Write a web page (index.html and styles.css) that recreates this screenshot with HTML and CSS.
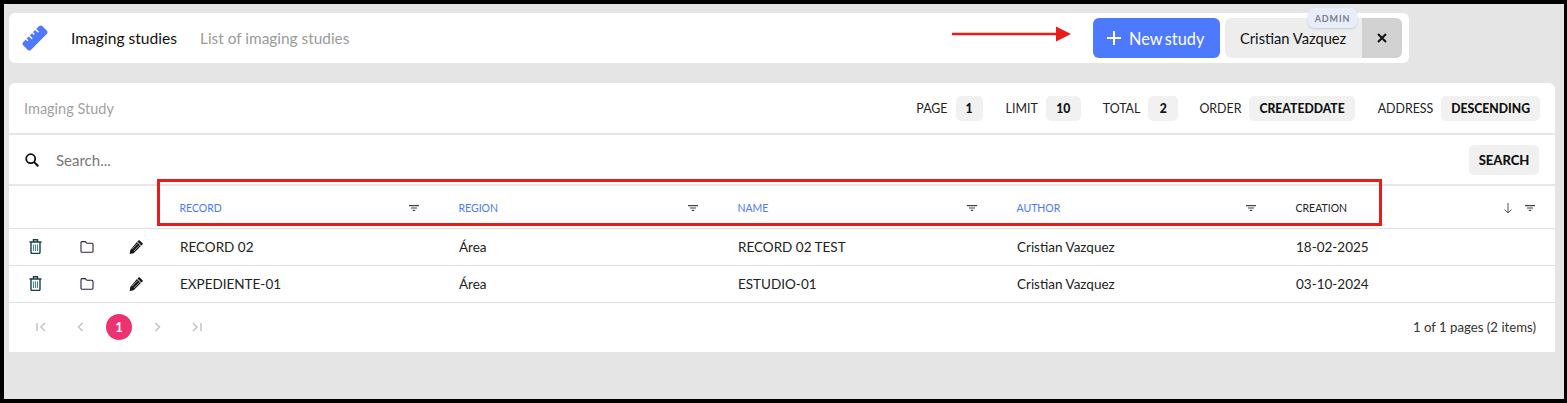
FILE: index.html
```html
<!DOCTYPE html>
<html lang="en">
<head>
<meta charset="utf-8">
<title>Imaging studies</title>
<link rel="stylesheet" href="styles.css">
</head>
<body>
<div class="frame">
  <header class="topbar">
    <svg class="logo" viewBox="0 0 26 26" width="26" height="26"><g transform="rotate(-45 13 13)"><rect x="-0.500" y="7.500" width="27" height="11" rx="2.500" fill="#4d79ff"/><path stroke="#fff" stroke-width="1.500" d="M6 7v3M10.500 7v4.500M15 7v3M19.500 7v4.500"/></g></svg>
    <span class="title">Imaging studies</span>
    <span class="subtitle">List of imaging studies</span>
    <div class="topbar-actions">
      <button class="new-btn"><svg viewBox="0 0 14 14" width="14" height="14"><path stroke="#fff" stroke-width="2" d="M7 0v14M0 7h14"/></svg>New study</button>
      <div class="user">
        <span class="user-name">Cristian Vazquez</span>
        <span class="user-close"><svg viewBox="0 0 10 10" width="10" height="10"><path stroke="#111" stroke-width="2" d="m1 1 8 8M9 1l-8 8"/></svg></span>
        <span class="role">ADMIN</span>
      </div>
    </div>
  </header>

  <main class="card">
    <div class="meta">
      <span class="meta-title">Imaging Study</span>
      <div class="meta-items">
        <span class="meta-item m-page">PAGE <b class="pill">1</b></span>
        <span class="meta-item">LIMIT <b class="pill pill-limit">10</b></span>
        <span class="meta-item m-total">TOTAL <b class="pill pill-total">2</b></span>
        <span class="meta-item m-order">ORDER <b class="pill">CREATEDDATE</b></span>
        <span class="meta-item">ADDRESS <b class="pill">DESCENDING</b></span>
      </div>
    </div>
    <div class="search">
      <svg class="search-icon" viewBox="0 0 14 14" width="14" height="14"><circle cx="5.700" cy="5.700" r="4.500" fill="none" stroke="#111" stroke-width="1.800"/><path stroke="#111" stroke-width="2" d="m9 9 4.300 4.300"/></svg>
      <span class="search-text">Search...</span>
      <button class="search-btn">SEARCH</button>
    </div>
    <table class="grid">
      <colgroup><col class="c-i"><col class="c-i"><col class="c-i"><col class="c-d"><col class="c-d"><col class="c-d"><col class="c-d"><col class="c-d"></colgroup>
      <thead>
        <tr>
          <th></th><th></th><th></th>
          <th class="link"><div class="th"><span>RECORD</span><svg class="f" viewBox="0 0 10 6" width="10" height="6"><path d="M0 0h10v1.200H0zM2 2.400h6v1.200H2zM3.800 4.800h2.400V6H3.800z"/></svg></div></th>
          <th class="link"><div class="th"><span>REGION</span><svg class="f" viewBox="0 0 10 6" width="10" height="6"><path d="M0 0h10v1.200H0zM2 2.400h6v1.200H2zM3.800 4.800h2.400V6H3.800z"/></svg></div></th>
          <th class="link"><div class="th"><span>NAME</span><svg class="f" viewBox="0 0 10 6" width="10" height="6"><path d="M0 0h10v1.200H0zM2 2.400h6v1.200H2zM3.800 4.800h2.400V6H3.800z"/></svg></div></th>
          <th class="link"><div class="th"><span>AUTHOR</span><svg class="f" viewBox="0 0 10 6" width="10" height="6"><path d="M0 0h10v1.200H0zM2 2.400h6v1.200H2zM3.800 4.800h2.400V6H3.800z"/></svg></div></th>
          <th><div class="th"><span>CREATION</span><span class="sort"><svg viewBox="0 0 10 11" width="10" height="11"><path fill="none" stroke="#555" stroke-width="1" d="M5 0v10M1.500 6.500 5 10l3.500-3.500"/></svg><svg class="f" viewBox="0 0 10 6" width="10" height="6"><path d="M0 0h10v1.200H0zM2 2.400h6v1.200H2zM3.800 4.800h2.400V6H3.800z"/></svg></span></div></th>
        </tr>
      </thead>
      <tbody>
        <tr>
          <td class="ic"><svg viewBox="0 0 13 15" width="13" height="15"><path fill="none" stroke="#173f4a" stroke-width="1.400" d="M2 3.500v9.800c0 .7.500 1.200 1.200 1.200h6.600c.7 0 1.200-.5 1.200-1.200V3.500M.5 3h12M4.500 2.800V.8h4v2"/><path stroke="#4d8494" stroke-width="1.100" d="M4.500 5.500v6.500M6.500 5.500v6.500M8.500 5.500v6.500"/></svg></td>
          <td class="ic"><svg class="i-folder" viewBox="0 0 14 12" width="14" height="12"><path fill="none" stroke="#2c1f42" stroke-width="1.100" d="M1 1.600C1 1 1.400.6 2 .6h3.300l1.500 1.700h5.100c.6 0 1.100.5 1.100 1.100v6.800c0 .6-.5 1.100-1.100 1.100H2c-.6 0-1-.5-1-1.100Z"/></svg></td>
          <td class="ic"><svg class="i-pencil" viewBox="0 0 14 14" width="14" height="14"><path fill="#151515" d="M10.700.4 13.600 3.300c.3.300.3.800 0 1.100l-1.200 1.200-4-4L9.600.4c.3-.3.800-.3 1.100 0ZM7.900 2.100l4 4-7.300 7.200-3.900.6.600-3.900Z"/><path fill="none" stroke="#fff" stroke-width=".6" d="M3 9.200 8.700 3.500M4.800 11 10.500 5.300"/></svg></td>
          <td>RECORD 02</td><td>Área</td><td>RECORD 02 TEST</td><td>Cristian Vazquez</td><td>18-02-2025</td>
        </tr>
        <tr>
          <td class="ic"><svg viewBox="0 0 13 15" width="13" height="15"><path fill="none" stroke="#173f4a" stroke-width="1.400" d="M2 3.500v9.800c0 .7.500 1.200 1.200 1.200h6.600c.7 0 1.200-.5 1.200-1.200V3.500M.5 3h12M4.500 2.800V.8h4v2"/><path stroke="#4d8494" stroke-width="1.100" d="M4.500 5.500v6.500M6.500 5.500v6.500M8.500 5.500v6.500"/></svg></td>
          <td class="ic"><svg class="i-folder" viewBox="0 0 14 12" width="14" height="12"><path fill="none" stroke="#2c1f42" stroke-width="1.100" d="M1 1.600C1 1 1.400.6 2 .6h3.300l1.500 1.700h5.100c.6 0 1.100.5 1.100 1.100v6.800c0 .6-.5 1.100-1.100 1.100H2c-.6 0-1-.5-1-1.100Z"/></svg></td>
          <td class="ic"><svg class="i-pencil" viewBox="0 0 14 14" width="14" height="14"><path fill="#151515" d="M10.700.4 13.600 3.300c.3.300.3.800 0 1.100l-1.200 1.200-4-4L9.600.4c.3-.3.800-.3 1.100 0ZM7.900 2.100l4 4-7.300 7.200-3.900.6.600-3.900Z"/><path fill="none" stroke="#fff" stroke-width=".6" d="M3 9.200 8.700 3.500M4.800 11 10.500 5.300"/></svg></td>
          <td>EXPEDIENTE-01</td><td>Área</td><td>ESTUDIO-01</td><td>Cristian Vazquez</td><td>03-10-2024</td>
        </tr>
      </tbody>
    </table>
    <footer class="pager">
      <div class="pager-nav">
        <svg viewBox="0 0 10 10" width="10" height="10"><path fill="none" stroke="#c4c4c4" stroke-width="1.500" d="M1 1v8M9 1 5 5l4 4"/></svg>
        <svg viewBox="0 0 10 10" width="10" height="10"><path fill="none" stroke="#c4c4c4" stroke-width="1.500" d="M7.500 1 3.500 5l4 4"/></svg>
        <span class="page-current">1</span>
        <svg viewBox="0 0 10 10" width="10" height="10"><path fill="none" stroke="#c4c4c4" stroke-width="1.500" d="m2.500 1 4 4-4 4"/></svg>
        <svg viewBox="0 0 10 10" width="10" height="10"><path fill="none" stroke="#c4c4c4" stroke-width="1.500" d="m1 1 4 4-4 4M9 1v8"/></svg>
      </div>
      <span class="pager-info">1 of 1 pages (2 items)</span>
    </footer>
  </main>

  <svg class="ann-arrow" viewBox="0 0 119 16" width="119" height="16"><path fill="#e81c1c" d="M0 6.700h104V.5L119 8l-15 7.500V9.300H0Z"/></svg>
  <div class="ann-box"></div>
</div>
</body>
</html>
```

FILE: styles.css
```css
* { box-sizing: border-box; }
html, body { margin: 0; height: 100%; }
body { background: #000; padding: 4px 3px 4px 4px; font-family: Lato, sans-serif; color: #222; overflow: hidden; }
svg { display: block; flex: none; }
button { font-family: inherit; border: 0; cursor: pointer; }

.frame { position: relative; height: 395px; background: #e5e5e5; padding: 9px 5px; }

.topbar { display: flex; align-items: center; width: 1400px; height: 50px; background: #fff; border-radius: 6px; padding: 0 7px 0 13px; }
.logo { margin-right: 23px; }
.title { font-size: 15.600px; color: #111; margin-right: 23px; }
.subtitle { font-size: 15.400px; color: #9b9b9b; }
.topbar-actions { margin-left: auto; display: flex; gap: 5px; }
.new-btn { display: flex; align-items: center; gap: 8px; width: 127px; height: 40px; padding: 0 0 0 14px; background: #4d79ff; color: #fff; font-size: 16.300px; word-spacing: -1.500px; border-radius: 6px; }
.user { position: relative; display: flex; align-items: center; width: 177px; height: 40px; background: #ededed; border-radius: 6px; padding-left: 15px; font-size: 14.700px; color: #111; }
.user-close { margin-left: auto; display: flex; align-items: center; justify-content: center; width: 40px; height: 40px; background: #d2d2d2; border-radius: 0 6px 6px 0; }
.role { position: absolute; top: -10px; left: 83px; width: 49px; height: 20px; display: flex; align-items: center; justify-content: center; background: #e8edfb; border-radius: 6px; font-size: 9px; font-weight: 700; letter-spacing: .9px; color: #7a7d8a; box-shadow: 0 1px 2px rgba(0,0,0,.15); }

.card { width: 1546px; margin-top: 20px; background: #fff; border-radius: 6px 6px 0 0; overflow: hidden; }
.meta { display: flex; align-items: center; justify-content: space-between; height: 52px; padding: 0 15px; border-bottom: 2px solid #e7e7e7; }
.meta-title { font-size: 14.500px; color: #a2a2a2; }
.meta-items { display: flex; align-items: center; gap: 22px; }
.meta-item { display: flex; align-items: center; gap: 8px; font-size: 12.400px; color: #222; }
.m-page { margin-right: 1px; }
.m-total { margin-right: -1px; }
.m-order { margin-right: 1px; }
.pill { display: flex; align-items: center; justify-content: center; height: 25px; padding: 0 10px; background: #f1f1f1; border-radius: 5px; font-size: 12.200px; font-weight: 900; color: #111; }
.pill-limit { min-width: 35px; }
.pill-total { min-width: 30px; }

.search { display: flex; align-items: center; height: 51px; padding: 0 16px; border-bottom: 2px solid #e7e7e7; }
.search-icon { margin-right: 17px; }
.search-text { font-size: 15px; color: #777; }
.search-btn { margin-left: auto; width: 70px; height: 30px; padding: 0; background: #f0f0f0; border-radius: 5px; font-size: 13px; font-weight: 900; color: #111; }

.grid { width: 1546px; table-layout: fixed; border-collapse: collapse; }
.c-i { width: 50.330px; }
.c-d { width: 279px; }
.grid th { height: 42px; padding: 3px 20px 0 19.500px; font-size: 10.500px; font-weight: 400; text-align: left; color: #222; border-bottom: 1px solid #e0e0e0; }
.grid th.link { color: #4d79ff; }
.th { display: flex; align-items: center; justify-content: space-between; }
.sort { display: flex; align-items: center; gap: 12px; }
.f { fill: #444; }
.grid td { height: 37px; padding: 0 20px; font-size: 13.500px; color: #222; border-bottom: 1px solid #e0e0e0; }
.grid td.ic { padding: 0 0 0 20px; }
.grid td.ic .i-folder { margin-left: 1px; }
.grid td.ic .i-pencil { margin-left: -.5px; }

.pager { display: flex; align-items: center; justify-content: space-between; height: 49px; padding: 0 19px 0 27px; }
.pager-nav { display: flex; align-items: center; }
.pager-nav svg { margin-right: 29px; }
.pager-nav svg:last-child { margin-right: 0; }
.page-current { display: flex; align-items: center; justify-content: center; width: 26px; height: 26px; margin: 0 21px 0 -8px; background: #ec3372; border-radius: 50%; color: #fff; font-size: 13px; font-weight: 700; }
.pager-info { font-size: 13.200px; color: #333; }

.ann-arrow { position: absolute; left: 948px; top: 22px; }
.ann-box { position: absolute; left: 153px; top: 175px; width: 1225px; height: 47px; border: 3px solid #e81c1c; }
```
